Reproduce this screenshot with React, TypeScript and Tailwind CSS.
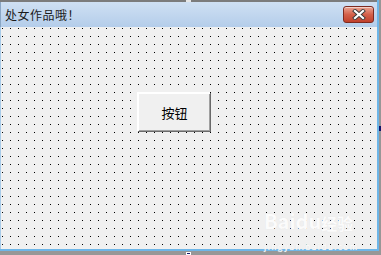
function CloseButton() {
  return (
    <div className="flex h-[17px] w-[31px] items-center justify-center rounded-[3px] border border-[#7d2a20] bg-gradient-to-b from-[#e9a493] via-[#d4604a] to-[#c0402b] shadow-[inset_0_1px_0_rgba(255,255,255,0.5)]">
      <svg width="14" height="11" viewBox="0 0 14 11">
        <path d="M3 2 L11 9 M11 2 L3 9" stroke="#3a3a3a" strokeWidth="4" strokeLinecap="square" />
        <path d="M3 2 L11 9 M11 2 L3 9" stroke="#ffffff" strokeWidth="2.2" strokeLinecap="square" />
      </svg>
    </div>
  )
}

export default function App() {
  return (
    <div
      className="relative h-[255px] w-[381px] overflow-hidden bg-[#979797]"
      style={{ fontFamily: '"Noto Sans CJK SC", "Liberation Sans", sans-serif' }}
    >
      <div className="flex h-[251px] w-[379px] flex-col border-r-2 border-b-2 border-[#6db6e8]">
        <div className="h-[2px] bg-[#7c7c7c]" />

        <div className="flex h-[25px] items-center justify-between border-l border-[#8aa6c4] bg-gradient-to-b from-[#cfe0f3] to-[#b4cdea] pl-[4px] pr-[3px]">
          <span className="text-[12px] leading-none tracking-[0.5px] text-[#1b1b1b]">处女作品哦！</span>
          <CloseButton />
        </div>

        <div className="relative flex-1 border-l border-[#a9cbe8] bg-[#f0f0f0] bg-[conic-gradient(from_270deg_at_1px_1px,#000_90deg,transparent_0)] bg-size-[8px_8px] bg-[position:1px_1px] pl-[136px] pt-[65px]">
          <button className="flex h-[39px] w-[73px] items-center justify-center border-t-2 border-l-2 border-t-white border-l-white bg-[#f0f0f0] shadow-[inset_-1px_-1px_0_#a0a0a0,1px_1px_0_#6a6a6a] text-[13px] text-black">
            按钮
          </button>

          <div className="pointer-events-none absolute left-[263px] top-[184px] flex flex-col items-start whitespace-nowrap leading-none text-[#fbfbfb] [text-shadow:0_0_1px_#e2e2e2]">
            <span className="flex items-end">
              <span className="text-[20px] font-bold">Bai</span>
              <span className="text-[20px] font-bold">du</span>
              <span className="text-[16px] font-bold">经验</span>
            </span>
            <span className="mt-[12px] text-[8px] tracking-[1.5px]">jingyan.baidu.com</span>
          </div>
        </div>
      </div>

      <div className="absolute left-[186px] top-0 h-[2px] w-[5px] bg-[#e6e6e6]" />
      <div className="absolute left-[379px] top-[126px] h-[5px] w-[2px] bg-[#10146b]" />
      <div className="absolute left-[186px] top-[252px] h-[3px] w-[5px] border border-white bg-[#10146b]" />
    </div>
  )
}
